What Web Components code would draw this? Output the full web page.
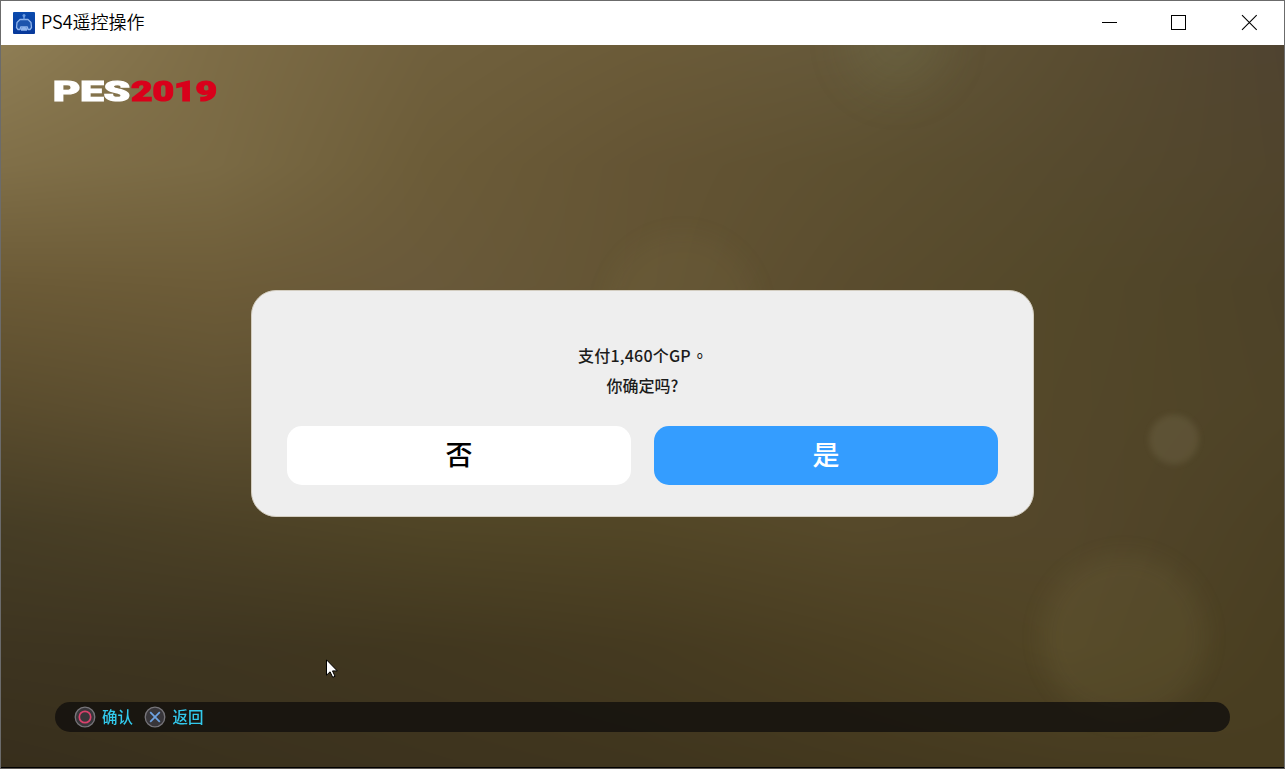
<!DOCTYPE html>
<html lang="zh-CN">
<head>
<meta charset="utf-8">
<title>PS4遥控操作</title>
<style>
html,body{margin:0;height:100%;overflow:hidden;background:#6b6b6b}
body{font-family:"Noto Sans CJK SC",sans-serif}
</style>
</head>
<body>
<remote-window>
  <title-bar slot="bar">PS4遥控操作</title-bar>
  <game-stage>
    <game-logo slot="top"></game-logo>
    <confirm-dialog slot="middle">
      <span slot="line1">支付1,460个GP <span lang="zh-TW" style="font-family:'Noto Sans CJK TC',sans-serif;margin-left:-3px">。</span></span>
      <span slot="line2">你确定吗?</span>
      <choice-button slot="actions">否</choice-button>
      <choice-button slot="actions" active>是</choice-button>
    </confirm-dialog>
    <hint-bar slot="bottom">
      <pad-hint kind="circle">确认</pad-hint>
      <pad-hint kind="cross">返回</pad-hint>
    </hint-bar>
  </game-stage>
</remote-window>
<script>
const define = (name, html, init) => customElements.define(name, class extends HTMLElement {
  constructor() {
    super();
    this.attachShadow({mode: 'open'}).innerHTML = html;
  }
  connectedCallback() { if (init) init(this, this.shadowRoot); }
});

define('remote-window', `<style>
:host{display:flex;flex-direction:column;box-sizing:border-box;width:1285px;height:769px;border:1px solid #6b6b6b;border-bottom-color:#5b5753;position:relative}
.pointer{position:absolute;left:325px;top:658px}
</style><slot name="bar"></slot><slot></slot>
<svg class="pointer" width="13" height="20" viewBox="0 0 13 20"><path d="M.5 .8V16.2L4.1 12.8L6.700 18.300L9 17.300L6.500 11.900H11.300Z" fill="#fff" stroke="#000" stroke-width="1"/></svg>`);

define('title-bar', `<style>
:host{display:flex;align-items:center;height:44px;flex:none;background:#fff;color:#000;font-size:18px;font-weight:350;line-height:44px;padding-left:12px;box-sizing:border-box}
.icon{flex:none;margin-right:6px}
.label{flex:1;padding-bottom:4px;line-height:40px;white-space:nowrap}
.ctl{flex:none}
</style>
<svg class="icon" width="22" height="22" viewBox="0 0 22 22"><defs><linearGradient id="g" x2="0" y2="1"><stop stop-color="#0b4bae"/><stop offset="1" stop-color="#07389a"/></linearGradient></defs><rect width="22" height="22" rx="1" fill="url(#g)"/><path d="M7 7.500H15L18 10.500L18.500 15.500L17 17.500H15L14.300 15H7.700L7 17.500H5L3.500 15.500L4 10.500Z" fill="#1d54ad" stroke="#8fb4ec" stroke-width="1.300" stroke-linejoin="round"/><path d="M8 18.800L7.800 16.500L10 15H12L14.200 16.500L14 18.800Z" fill="#8fb4ec"/><path d="M11 4V7.500" stroke="#6d9ce0" stroke-width="1.500"/><circle cx="11" cy="3.600" r="1.500" fill="#6d9ce0"/></svg>
<div class="label"><slot></slot></div>
<svg class="ctl" width="183" height="44" viewBox="1101 1 183 44" fill="none" stroke="#000" shape-rendering="crispEdges"><path d="M1102 22.500H1117"/><rect x="1171.500" y="15.500" width="14" height="14"/><path shape-rendering="auto" d="M1242 15.200L1256.700 29.900M1256.700 15.200L1242 29.900" stroke-width="1.100"/></svg>`);

define('game-stage', `<style>
:host{display:grid;grid-template-rows:245px 227px 1fr;flex:1;min-height:0;position:relative;overflow:hidden;background:#5b4d2e;border-bottom:1px solid #000;isolation:isolate}
canvas,.bokeh{position:absolute;inset:0;width:100%;height:100%;z-index:-1}
.top{padding:34px 0 0 52px}
.middle{display:flex;justify-content:center}
.bottom{display:flex;align-items:flex-end;padding:0 54px 35px}
</style>
<canvas width="1283" height="723"></canvas>
<svg class="bokeh" viewBox="1 45 1283 723" preserveAspectRatio="none">
<defs><filter id="s" x="-50%" y="-50%" width="200%" height="200%"><feGaussianBlur stdDeviation="3"/></filter><filter id="l" x="-50%" y="-50%" width="200%" height="200%"><feGaussianBlur stdDeviation="12"/></filter><filter id="x" x="-80%" y="-80%" width="260%" height="260%"><feGaussianBlur stdDeviation="24"/></filter></defs>
<circle cx="1174" cy="440" r="25" fill="#a8a080" opacity=".15" filter="url(#s)"/>
<circle cx="1124" cy="638" r="83" fill="#a99c68" opacity=".09" filter="url(#l)"/>
<circle cx="682" cy="310" r="76" fill="#a09060" opacity=".07" filter="url(#l)"/>
<circle cx="898" cy="42" r="50" fill="#8ea070" opacity=".12" filter="url(#x)"/>
</svg>
<div class="top"><slot name="top"></slot></div>
<div class="middle"><slot name="middle"></slot></div>
<div class="bottom"><slot name="bottom"></slot></div>`, (el, root) => {
  // Backdrop: colour mesh, smoothly interpolated between control points.
  const mesh = [
    '8e7d54 7d6c46 70603d 6b5b38 65583a 5a4d31 4f4330',
    '806f48 7a6a44 6c5c38 645434 5d5030 564a2e 50442c',
    '6b5a36 6d5c38 69593a 635433 5a4c2e 534829 4d4228',
    '5a4c2d 5f5132 5d4f2f 5c4e2e 594c2c 534729 4e4327',
    '463d25 4c4126 504526 524626 56492a 53462a 4b4024',
    '3d3420 3e3520 41371f 453a20 4b3f22 514525 493e21',
    '372e1c 3a311d 3d331e 3f351e 43381e 463b20 483d20'
  ].map(r => r.split(' ').map(c => [0, 2, 4].map(i => parseInt(c.substr(i, 2), 16))));
  const cv = root.querySelector('canvas'), g = cv.getContext('2d');
  const img = g.createImageData(cv.width, cv.height);
  for (let y = 0, p = 0; y < cv.height; y++) {
    const v = y / cv.height * 6, j = Math.min(5, v | 0), fy = v - j;
    for (let x = 0; x < cv.width; x++, p += 4) {
      const u = x / cv.width * 6, i = Math.min(5, u | 0), fx = u - i;
      for (let k = 0; k < 3; k++) {
        const a = mesh[j][i][k] * (1 - fx) + mesh[j][i + 1][k] * fx;
        const b = mesh[j + 1][i][k] * (1 - fx) + mesh[j + 1][i + 1][k] * fx;
        img.data[p + k] = Math.round(a * (1 - fy) + b * fy);
      }
      img.data[p + 3] = 255;
    }
  }
  g.putImageData(img, 0, 0);
});

define('game-logo', `<style>:host{display:block}svg{display:block}text{font-family:Roboto,sans-serif;font-weight:900;font-size:28px;stroke-width:1.200;stroke-linejoin:miter}</style>
<svg width="170" height="28" viewBox="53 79 170 28"><text x="53" y="101.200" textLength="77" lengthAdjust="spacingAndGlyphs" fill="#fff" stroke="#fff">PES</text><text x="131" y="101.200" textLength="86" lengthAdjust="spacingAndGlyphs" fill="#d9001b" stroke="#d9001b">2019</text></svg>`);

define('confirm-dialog', `<style>
:host{display:flex;flex-direction:column;box-sizing:border-box;width:783px;height:227px;border-radius:25px;background:#eee;border:1px solid #d3cdc0;padding:49px 35px 0;color:#1b1b1b;font-size:16px;font-weight:500;text-align:center}
p{margin:0;height:30px;line-height:30px;white-space:pre}
p:first-of-type{letter-spacing:.2px;padding-left:1px}
.actions{display:grid;grid-template-columns:1fr 1fr;gap:23px;margin-top:26px}
</style><p><slot name="line1"></slot></p><p><slot name="line2"></slot></p><div class="actions"><slot name="actions"></slot></div>`);

define('choice-button', `<style>
:host{display:flex;align-items:center;justify-content:center;box-sizing:border-box;height:59px;padding-bottom:3px;border-radius:15px;background:#fff;color:#000;font-size:27px;font-weight:500;line-height:56px}
:host([active]){background:#349dff;color:#fff}
</style><slot></slot>`);

define('hint-bar', `<style>
:host{display:flex;align-items:center;gap:11px;box-sizing:border-box;width:100%;height:30px;border-radius:16px;padding-left:18.500px;background:rgba(18,16,14,.82)}
</style><slot></slot>`);

define('pad-hint', `<style>
:host{display:flex;align-items:center;gap:6.500px;color:#32c9ec;font-size:15.500px;font-weight:500;line-height:30px}
svg{flex:none}
.label{padding-bottom:2px;line-height:28px}
</style><svg width="22" height="22" viewBox="0 0 22 22" fill="none"><circle cx="11" cy="11" r="9.800" fill="#38363a" stroke="#77757a" stroke-width="1.300"/><g></g></svg><span class="label"><slot></slot></span>`, (el, root) => {
  root.querySelector('g').innerHTML = el.getAttribute('kind') === 'circle'
    ? '<circle cx="11" cy="11" r="5.700" stroke="#d8416b" stroke-width="1.700"/>'
    : '<path d="M6.200 6.200L15.800 15.800M15.800 6.200L6.200 15.800" stroke="#6ea3e2" stroke-width="1.700"/>';
});
</script>
</body>
</html>
